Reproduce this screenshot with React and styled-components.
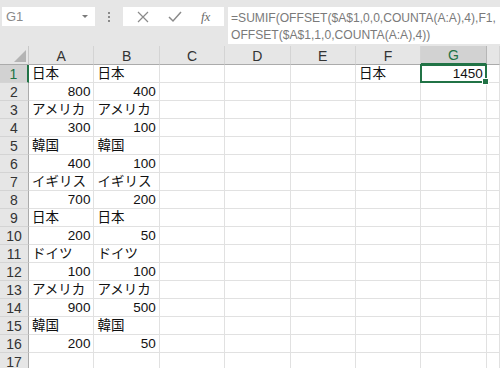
import React from "react";
import styled, { createGlobalStyle } from "styled-components";

const GlobalStyle = createGlobalStyle`
  html, body {
    margin: 0;
    padding: 0;
    background: #e6e6e6;
    overflow: hidden;
  }
  body {
    font-family: "Liberation Sans", "Noto Sans CJK JP", sans-serif;
  }
`;

const COL_W = 65.4;
const COLS = ["A", "B", "C", "D", "E", "F", "G"];

const rows = [
  ["日本", "日本"],
  [800, 400],
  ["アメリカ", "アメリカ"],
  [300, 100],
  ["韓国", "韓国"],
  [400, 100],
  ["イギリス", "イギリス"],
  [700, 200],
  ["日本", "日本"],
  [200, 50],
  ["ドイツ", "ドイツ"],
  [100, 100],
  ["アメリカ", "アメリカ"],
  [900, 500],
  ["韓国", "韓国"],
  [200, 50],
  [],
];

const Page = styled.div`
  width: 500px;
  height: 368px;
  overflow: hidden;
  background: #e6e6e6;
`;

const Toolbar = styled.div`
  display: flex;
  align-items: flex-start;
  height: 46px;
  padding-top: 7px;
  box-sizing: border-box;
`;

const NameBox = styled.div`
  margin-left: 2px;
  width: 93px;
  height: 19px;
  background: #fff;
  box-sizing: border-box;
  display: flex;
  align-items: center;
  padding-left: 4px;
  font-size: 13px;
  color: #8a8a8a;
`;

const Caret = styled.span`
  margin-left: auto;
  margin-right: 7px;
  width: 0;
  height: 0;
  border-left: 3px solid transparent;
  border-right: 3px solid transparent;
  border-top: 3px solid #7a7a7a;
`;

const Grip = styled.div`
  width: 28px;
  height: 19px;
  display: flex;
  flex-direction: column;
  align-items: center;
  justify-content: center;
  gap: 2px;
  span {
    width: 2px;
    height: 2px;
    background: #8a8a8a;
  }
`;

const FxBox = styled.div`
  width: 101px;
  height: 19px;
  background: #fff;
  display: flex;
  align-items: center;
  justify-content: space-around;
  padding: 0 4px;
  box-sizing: border-box;
`;

const Fx = styled.span`
  font-family: "Liberation Serif", serif;
  font-style: italic;
  font-size: 13px;
  color: #6a6a6a;
`;

const FormulaBox = styled.div`
  margin-left: 4px;
  flex: 1;
  min-width: 0;
  height: 37px;
  background: #fff;
  box-sizing: border-box;
  padding: 3px 0 0 3px;
  overflow: hidden;
  font-family: "Liberation Sans", sans-serif;
  font-size: 12.1px;
  line-height: 17px;
  color: #7a7a7a;
  white-space: nowrap;
`;

const Sheet = styled.div`
  display: grid;
  grid-template-columns: 29px repeat(7, ${COL_W}px) 1fr;
  grid-template-rows: 19px;
  grid-auto-rows: 18px;
  background: #fff;
`;

const Corner = styled.div`
  background: #e6e6e6;
  border-right: 1px solid #c8c8c8;
  border-bottom: 1px solid #ababab;
  box-sizing: border-box;
  display: flex;
  align-items: flex-end;
  justify-content: flex-end;
  padding: 0 2px 2px 0;
`;

const Triangle = styled.span`
  width: 0;
  height: 0;
  border-left: 12px solid transparent;
  border-bottom: 12px solid #b4b4b4;
`;

const ColHead = styled.div`
  background: ${(p) => (p.$active ? "#d2d2d2" : "#e6e6e6")};
  color: ${(p) => (p.$active ? "#217346" : "#333")};
  border-right: 1px solid ${(p) => (p.$active ? "#b6b6b6" : "#d4d4d4")};
  border-bottom: ${(p) => (p.$active ? "2px solid #217346" : "1px solid #ababab")};
  box-sizing: border-box;
  display: flex;
  align-items: center;
  justify-content: center;
  font-size: 14px;
  padding-top: 1px;
`;

const RowHead = styled.div`
  background: ${(p) => (p.$active ? "#d2d2d2" : "#e6e6e6")};
  color: ${(p) => (p.$active ? "#217346" : "#333")};
  border-right: ${(p) => (p.$active ? "2px solid #217346" : "1px solid #ababab")};
  border-bottom: 1px solid #d4d4d4;
  box-sizing: border-box;
  display: flex;
  align-items: center;
  justify-content: center;
  font-size: 14px;
`;

const Cell = styled.div`
  position: relative;
  border-right: 1px solid #e1e1e1;
  border-bottom: 1px solid #e1e1e1;
  box-sizing: border-box;
  display: flex;
  align-items: flex-end;
  justify-content: ${(p) => (p.$num ? "flex-end" : "flex-start")};
  padding: 0 3px 0 3px;
  font-size: 13.5px;
  line-height: 16px;
  color: #111;
  white-space: nowrap;

  ${(p) =>
    p.$selected &&
    `
    &::after {
      content: "";
      position: absolute;
      left: -1px;
      top: -1px;
      right: -1px;
      bottom: -1px;
      border: 2px solid #217346;
      pointer-events: none;
    }
    &::before {
      content: "";
      position: absolute;
      right: -3px;
      bottom: -3px;
      width: 5px;
      height: 5px;
      background: #217346;
      border: 1px solid #fff;
      z-index: 2;
    }
  `}
`;

const CrossIcon = () => (
  <svg width="12" height="12" viewBox="0 0 12 12">
    <path d="M1 1 L11 11 M11 1 L1 11" stroke="#8a8a8a" strokeWidth="1.2" fill="none" />
  </svg>
);

const CheckIcon = () => (
  <svg width="14" height="12" viewBox="0 0 14 12">
    <path d="M1 6 L5 10 L13 1" stroke="#8a8a8a" strokeWidth="1.5" fill="none" />
  </svg>
);

const isNum = (v) => typeof v === "number";

export default function App() {
  return (
    <Page>
      <GlobalStyle />
      <Toolbar>
        <NameBox>
          G1
          <Caret />
        </NameBox>
        <Grip>
          <span />
          <span />
          <span />
        </Grip>
        <FxBox>
          <CrossIcon />
          <CheckIcon />
          <Fx>fx</Fx>
        </FxBox>
        <FormulaBox>
          <div>=SUMIF(OFFSET($A$1,0,0,COUNTA(A:A),4),F1,</div>
          <div>OFFSET($A$1,1,0,COUNTA(A:A),4))</div>
        </FormulaBox>
      </Toolbar>
      <Sheet>
        <Corner>
          <Triangle />
        </Corner>
        {COLS.map((c) => (
          <ColHead key={c} $active={c === "G"}>
            {c}
          </ColHead>
        ))}
        <ColHead />
        {rows.map((r, i) => (
          <React.Fragment key={i}>
            <RowHead $active={i === 0}>{i + 1}</RowHead>
            {COLS.map((c, j) => {
              let v = j < 2 ? r[j] : undefined;
              if (i === 0 && c === "F") v = "日本";
              if (i === 0 && c === "G") v = 1450;
              return (
                <Cell key={c} $num={isNum(v)} $selected={i === 0 && c === "G"}>
                  {v}
                </Cell>
              );
            })}
            <Cell />
          </React.Fragment>
        ))}
      </Sheet>
    </Page>
  );
}
